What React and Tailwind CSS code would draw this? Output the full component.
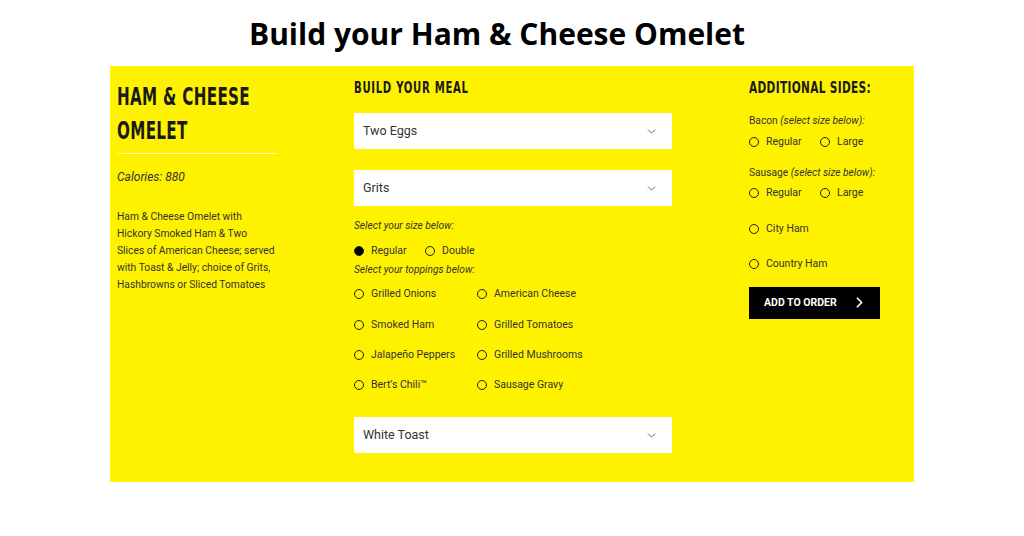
import { ChevronDown, ChevronRight } from 'lucide-react'

const condensed = { fontFamily: '"DejaVu Sans", sans-serif' }

function Select({ label }) {
  return (
    <div className="flex h-[36px] w-[318px] items-center justify-between bg-white pl-[9px] pr-[14px]">
      <span className="text-[12.5px] text-[#333]">{label}</span>
      <ChevronDown size={13} strokeWidth={1.6} className="text-[#555]" />
    </div>
  )
}

function Radio({ label, checked, className = '' }) {
  return (
    <label className={'flex items-center gap-[7px] ' + className}>
      <span
        className={
          'block h-[10px] w-[10px] shrink-0 rounded-full border-[1.5px] border-[#222] ' + (checked ? 'bg-black' : '')
        }
      />
      <span className="text-[10.5px] text-[#333]">{label}</span>
    </label>
  )
}

const toppings = [
  ['Grilled Onions', 'American Cheese'],
  ['Smoked Ham', 'Grilled Tomatoes'],
  ['Jalapeño Peppers', 'Grilled Mushrooms'],
  ['Bert’s Chili™', 'Sausage Gravy'],
]

export default function App() {
  return (
    <div className="h-[536px] w-[1024px] bg-white" style={{ fontFamily: 'Roboto, "Noto Sans", sans-serif' }}>
      <h1
        className="pr-[30px] pt-[14px] text-center text-[30px] font-bold leading-[40px] text-black"
        style={{ fontFamily: '"Open Sans", sans-serif' }}
      >
        Build your Ham &amp; Cheese Omelet
      </h1>

      <div className="mx-[110px] mt-[12px] flex h-[416px] bg-[#fff200]">
        {/* left */}
        <div className="w-[244px] shrink-0 pl-[7px] pt-[14px]">
          <h2
            className="w-[160px] origin-left scale-x-[0.62] whitespace-nowrap text-[24.5px] font-bold leading-[34px] tracking-[0.5px] text-[#1a1a1a]"
            style={condensed}
          >
            HAM &amp; CHEESE
            <br />
            OMELET
          </h2>
          <div className="mt-[5px] h-px w-[160px] bg-[#fffbb0]" />
          <p className="mt-[14px] text-[12px] italic text-[#333]">Calories: 880</p>
          <p className="mt-[22px] whitespace-nowrap text-[10.3px] leading-[17px] text-[#333]">
            Ham &amp; Cheese Omelet with
            <br />
            Hickory Smoked Ham &amp; Two
            <br />
            Slices of American Cheese; served
            <br />
            with Toast &amp; Jelly; choice of Grits,
            <br />
            Hashbrowns or Sliced Tomatoes
          </p>
        </div>

        {/* middle */}
        <div className="w-[395px] shrink-0 pt-[14px]">
          <h3
            className="origin-left scale-x-[0.675] whitespace-nowrap text-[15px] font-bold leading-[16px] tracking-[1px] text-[#1a1a1a]"
            style={condensed}
          >
            BUILD YOUR MEAL
          </h3>
          <div className="mt-[17px] flex flex-col gap-[21px]">
            <Select label="Two Eggs" />
            <Select label="Grits" />
          </div>
          <p className="mt-[12px] text-[10.2px] italic text-[#333]">Select your size below:</p>
          <div className="mt-[10px] flex items-center">
            <Radio label="Regular" checked className="w-[71px]" />
            <Radio label="Double" />
          </div>
          <p className="mt-[3px] text-[10.2px] italic text-[#333]">Select your toppings below:</p>
          <div className="mt-[11px] flex flex-col gap-[18.3px]">
            {toppings.map(([a, b]) => (
              <div key={a} className="flex h-[12px] items-center">
                <Radio label={a} className="w-[123px]" />
                <Radio label={b} />
              </div>
            ))}
          </div>
          <div className="mt-[26px]">
            <Select label="White Toast" />
          </div>
        </div>

        {/* right */}
        <div className="min-w-0 flex-1 pt-[14px]">
          <h3
            className="origin-left scale-x-[0.66] whitespace-nowrap text-[16px] font-bold leading-[16px] tracking-[0.5px] text-[#1a1a1a]"
            style={condensed}
          >
            ADDITIONAL SIDES:
          </h3>
          <p className="mt-[17px] text-[10.2px] text-[#333]">
            Bacon <span className="italic">(select size below):</span>
          </p>
          <div className="mt-[6px] flex items-center">
            <Radio label="Regular" className="w-[71px]" />
            <Radio label="Large" />
          </div>
          <p className="mt-[15px] text-[10.2px] text-[#333]">
            Sausage <span className="italic">(select size below):</span>
          </p>
          <div className="mt-[5px] flex items-center">
            <Radio label="Regular" className="w-[71px]" />
            <Radio label="Large" />
          </div>
          <Radio label="City Ham" className="mt-[20px]" />
          <Radio label="Country Ham" className="mt-[19px]" />
          <button className="mt-[15px] flex h-[32px] w-[131px] items-center justify-between bg-black pl-[15px] pr-[12px]">
            <span className="text-[10.5px] font-bold text-white">ADD TO ORDER</span>
            <ChevronRight size={17} strokeWidth={2.4} className="text-white" />
          </button>
        </div>
      </div>
    </div>
  )
}
